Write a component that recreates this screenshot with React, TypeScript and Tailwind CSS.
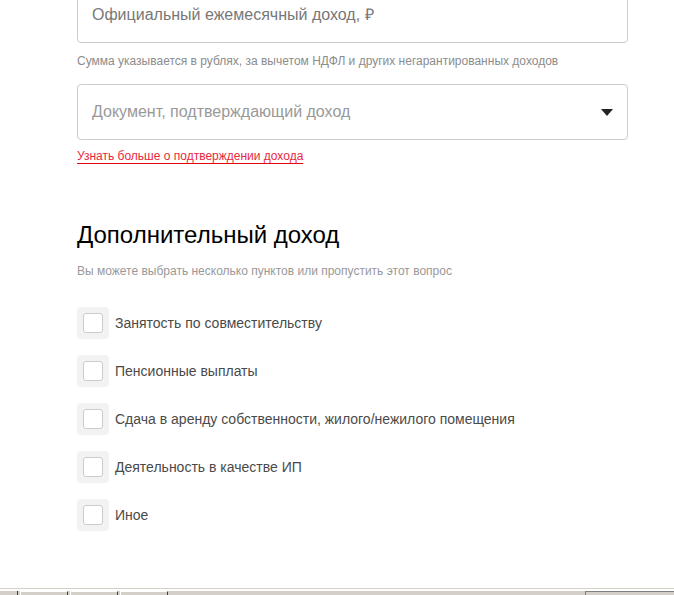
import React from 'react';

const options = [
  'Занятость по совместительству',
  'Пенсионные выплаты',
  'Сдача в аренду собственности, жилого/нежилого помещения',
  'Деятельность в качестве ИП',
  'Иное',
];

function Check({ label }: { label: string }) {
  return (
    <label className="flex items-center h-[32px] cursor-pointer">
      <span className="w-[32px] h-[32px] rounded-[4px] bg-[#f2f2f2] flex items-center justify-center shrink-0">
        <span className="w-[20px] h-[20px] rounded-[3px] bg-white border border-[#cccccc]" />
      </span>
      <span className="ml-[6px] text-[14px] leading-[20px] text-[#4a4a4a]">{label}</span>
    </label>
  );
}

export default function App() {
  return (
    <div className="h-[595px] flex flex-col overflow-hidden bg-white font-['Liberation_Sans',Arial,sans-serif]">
      <div className="pl-[77px] w-[628px]">
        {/* доход */}
        <div className="mt-[-13px] h-[56px] border border-[#cccccc] rounded-[4px] pl-[14px] flex items-center text-[16px] text-[#777777]">
          Официальный ежемесячный доход, ₽
        </div>
        <p className="mt-[10px] text-[12px] leading-[16px] text-[#8c8c8c]">
          Сумма указывается в рублях, за вычетом НДФЛ и других негарантированных доходов
        </p>

        <div className="mt-[15px] h-[56px] border border-[#cccccc] rounded-[4px] pl-[14px] pr-[14px] flex items-center justify-between text-[16px] text-[#999999]">
          <span>Документ, подтверждающий доход</span>
          <svg width="12" height="7" viewBox="0 0 12 7">
            <path d="M0 0h12L6 7z" fill="#222" />
          </svg>
        </div>
        <a className="mt-[8px] inline-block text-[12px] leading-[16px] text-[#e8283f] underline decoration-[#e30611] underline-offset-[3px]">
          Узнать больше о подтверждении дохода
        </a>

        {/* дополнительный доход */}
        <h2 className="mt-[52px] text-[24px] leading-[32px] text-black">Дополнительный доход</h2>
        <p className="mt-[12px] text-[12px] leading-[16px] text-[#999999]">
          Вы можете выбрать несколько пунктов или пропустить этот вопрос
        </p>

        <div className="mt-[28px] flex flex-col gap-[16px]">
          {options.map((o) => (
            <Check key={o} label={o} />
          ))}
        </div>
      </div>

      {/* нижняя панель окна */}
      <div className="mt-auto h-[7px] border-t border-[#d4d0c8] flex flex-col">
        <div className="h-[2px] bg-white" />
        <div className="flex-1 bg-[#d4d0c8] flex">
          <div className="w-[18px] border-r border-[#404040]" />
          <div className="ml-[2px] w-[48px] border-t border-l border-white border-r-[#404040] border-r" />
          <div className="ml-[2px] w-[48px] border-t border-l border-white border-r-[#404040] border-r" />
          <div className="ml-[2px] w-[48px] border-t border-l border-white border-r-[#404040] border-r" />
          <div className="ml-auto w-[89px] border-t border-l border-[#808080] bg-[#d4d0c8]" />
        </div>
      </div>
    </div>
  );
}
